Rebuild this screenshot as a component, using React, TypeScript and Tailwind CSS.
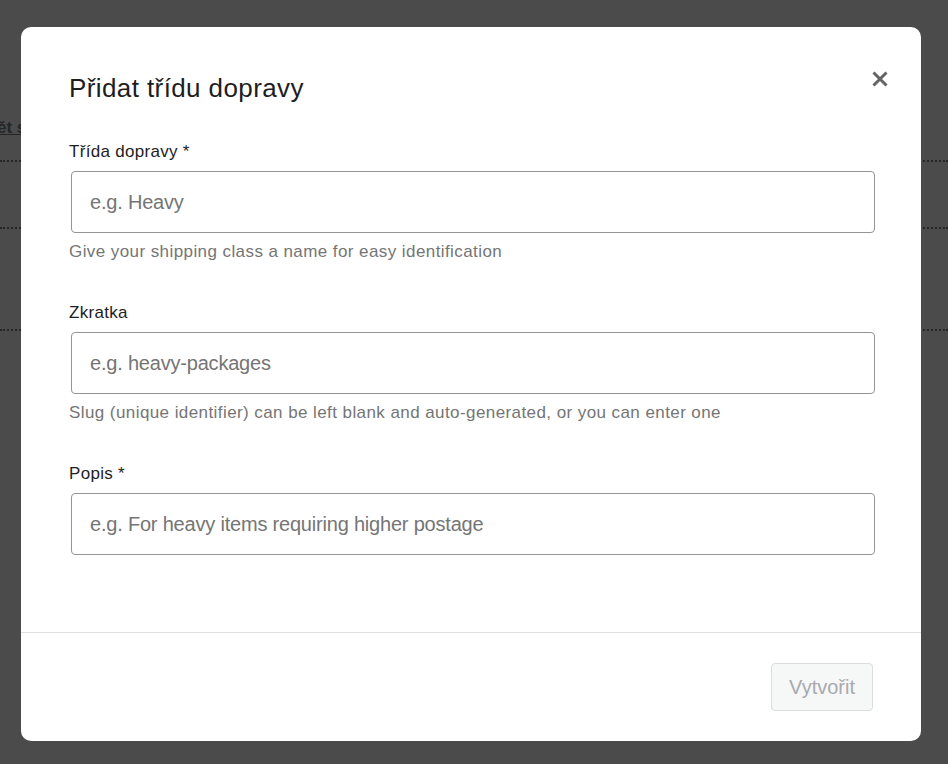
import React from "react";

function Field({
  label,
  placeholder,
  help,
  mb,
}: {
  label: string;
  placeholder: string;
  help?: string;
  mb: string;
}) {
  return (
    <div className={`flex flex-col ${mb}`}>
      <label className="pt-[1px] text-[17px] leading-[24px] tracking-[0.3px] text-[#1e1e1e]">{label}</label>
      <input
        className="mt-[7px] ml-[2px] h-[62px] w-[804px] rounded-[4px] border border-[#949494] bg-white px-[18px] text-[20px] tracking-[-0.2px] text-[#1e1e1e] outline-none placeholder:text-[#757575]"
        placeholder={placeholder}
      />
      {help && (
        <p className="mt-[7px] text-[17px] leading-[24px] tracking-[0.42px] text-[#757575]">{help}</p>
      )}
    </div>
  );
}

export default function App() {
  return (
    <div
      className="relative h-[764px] w-full overflow-hidden bg-[#4b4b4b]"
      style={{ fontFamily: '"Liberation Sans", Arial, sans-serif' }}
    >
      {/* dimmed page behind */}
      <div className="flex flex-col">
        <div className="h-[116px]" />
        <div className="h-[24px] -ml-[3px] text-[17px] font-bold leading-[24px] text-[#262626] underline">
          ět s
        </div>
        <div className="h-[20px]" />
        <div className="border-b-2 border-dotted border-[#262626]" />
        <div className="h-[65px]" />
        <div className="border-b-2 border-dotted border-[#262626]" />
        <div className="h-[100px]" />
        <div className="border-b-2 border-dotted border-[#262626]" />
      </div>

      {/* modal */}
      <div className="absolute left-[21px] top-[27px] flex h-[714px] w-[900px] flex-col rounded-[10px] bg-white">
        <button
          className="absolute right-[29px] top-[40px] flex h-[24px] w-[24px] items-center justify-center text-[#646464]"
          aria-label="Close"
        >
          <svg width="18" height="18" viewBox="0 0 18 18" fill="none">
            <path d="M2.5 2.5L15.5 15.5M15.5 2.5L2.5 15.5" stroke="currentColor" strokeWidth="3" />
          </svg>
        </button>
        <div className="flex flex-1 flex-col px-[48px] pt-[45px]">
          <h1 className="text-[26px] leading-[32px] tracking-[0.4px] text-[#1e1e1e]">Přidat třídu dopravy</h1>
          <div className="mt-[35px] flex flex-col">
            <Field
              label="Třída dopravy *"
              placeholder="e.g. Heavy"
              help="Give your shipping class a name for easy identification"
              mb="mb-[36px]"
            />
            <Field
              label="Zkratka"
              placeholder="e.g. heavy-packages"
              help="Slug (unique identifier) can be left blank and auto-generated, or you can enter one"
              mb="mb-[36px]"
            />
            <Field
              label="Popis *"
              placeholder="e.g. For heavy items requiring higher postage"
              mb="mb-0"
            />
          </div>
        </div>
        <div className="flex h-[109px] items-center justify-end border-t border-[#e0e0e0] px-[48px] pb-[1px]">
          <button
            disabled
            className="h-[48px] w-[102px] rounded-[4px] border border-[#dcdcde] bg-[#f6f7f7] text-[20px] text-[#a7aaad]"
          >
            Vytvořit
          </button>
        </div>
      </div>
    </div>
  );
}
